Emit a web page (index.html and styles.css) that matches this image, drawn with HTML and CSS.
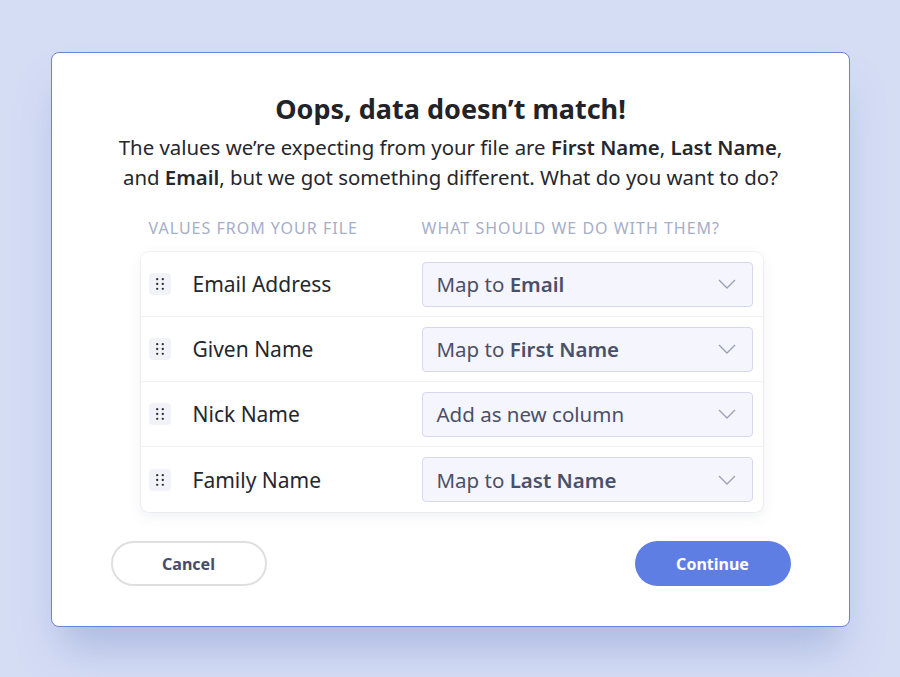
FILE: index.html
```html
<!DOCTYPE html>
<html lang="en">
<head>
<meta charset="utf-8">
<title>Data mismatch</title>
<link rel="stylesheet" href="styles.css">
</head>
<body>
<div class="modal">
  <h1 class="title">Oops, data doesn’t match!</h1>
  <p class="lead">The values we’re expecting from your file are <b>First Name</b>, <b>Last Name</b>, and <b>Email</b>, but we got something different. What do you want to do?</p>
  <div class="mapper">
    <div class="heads">
      <span class="head">Values from your file</span>
      <span class="head">What should we do with them?</span>
    </div>
    <div class="table">
      <div class="row">
        <span class="grip"><svg width="8" height="12" viewBox="0 0 8 12"><circle cx="1.2" cy="1.2" r="1.15"/><circle cx="6.8" cy="1.2" r="1.15"/><circle cx="1.2" cy="6" r="1.15"/><circle cx="6.8" cy="6" r="1.15"/><circle cx="1.2" cy="10.8" r="1.15"/><circle cx="6.8" cy="10.8" r="1.15"/></svg></span>
        <span class="label">Email Address</span>
        <div class="select"><span>Map to <b>Email</b></span><svg class="chev" width="18" height="10" viewBox="0 0 18 10"><path d="M1 1l8 8 8-8"/></svg></div>
      </div>
      <div class="row">
        <span class="grip"><svg width="8" height="12" viewBox="0 0 8 12"><circle cx="1.2" cy="1.2" r="1.15"/><circle cx="6.8" cy="1.2" r="1.15"/><circle cx="1.2" cy="6" r="1.15"/><circle cx="6.8" cy="6" r="1.15"/><circle cx="1.2" cy="10.8" r="1.15"/><circle cx="6.8" cy="10.8" r="1.15"/></svg></span>
        <span class="label">Given Name</span>
        <div class="select"><span>Map to <b>First Name</b></span><svg class="chev" width="18" height="10" viewBox="0 0 18 10"><path d="M1 1l8 8 8-8"/></svg></div>
      </div>
      <div class="row">
        <span class="grip"><svg width="8" height="12" viewBox="0 0 8 12"><circle cx="1.2" cy="1.2" r="1.15"/><circle cx="6.8" cy="1.2" r="1.15"/><circle cx="1.2" cy="6" r="1.15"/><circle cx="6.8" cy="6" r="1.15"/><circle cx="1.2" cy="10.8" r="1.15"/><circle cx="6.8" cy="10.8" r="1.15"/></svg></span>
        <span class="label">Nick Name</span>
        <div class="select"><span>Add as new column</span><svg class="chev" width="18" height="10" viewBox="0 0 18 10"><path d="M1 1l8 8 8-8"/></svg></div>
      </div>
      <div class="row">
        <span class="grip"><svg width="8" height="12" viewBox="0 0 8 12"><circle cx="1.2" cy="1.2" r="1.15"/><circle cx="6.8" cy="1.2" r="1.15"/><circle cx="1.2" cy="6" r="1.15"/><circle cx="6.8" cy="6" r="1.15"/><circle cx="1.2" cy="10.8" r="1.15"/><circle cx="6.8" cy="10.8" r="1.15"/></svg></span>
        <span class="label">Family Name</span>
        <div class="select"><span>Map to <b>Last Name</b></span><svg class="chev" width="18" height="10" viewBox="0 0 18 10"><path d="M1 1l8 8 8-8"/></svg></div>
      </div>
    </div>
  </div>
  <div class="actions">
    <button class="btn cancel">Cancel</button>
    <button class="btn primary">Continue</button>
  </div>
</div>
</body>
</html>
```
FILE: styles.css
```css
* { box-sizing: border-box; }
html, body { margin: 0; height: 100%; }
body {
  background: #d5ddf5;
  font-family: "Noto Sans", "Lato", sans-serif;
  color: #23242a;
  padding: 52px 50px 0 51px;
}
.modal {
  width: 799px;
  height: 575px;
  background: #fff;
  border: 1px solid #6b83d6;
  border-radius: 8px;
  box-shadow: 0 30px 40px -10px rgba(120, 140, 200, 0.45);
  padding: 37px 0 0;
  display: flex;
  flex-direction: column;
  align-items: center;
}
.title {
  margin: 0;
  font-size: 27px;
  font-weight: 700;
  line-height: 38px;
  color: #222328;
}
.lead {
  margin: 4px 0 0;
  width: 672px;
  text-align: center;
  font-size: 20.4px;
  line-height: 30px;
  color: #26272d;
}
.lead b { font-weight: 600; }
.mapper {
  margin-top: 26px;
  width: 622px;
  margin-left: 2px;
}
.heads {
  display: grid;
  grid-template-columns: 273px 1fr;
  padding-left: 8px;
  height: 29px;
}
.head {
  text-transform: uppercase;
  font-size: 16px;
  letter-spacing: 1px;
  color: #a6aec6;
  line-height: 20px;
}
.table {
  margin-top: 5px;
  background: #fff;
  border-radius: 8px;
  box-shadow: 0 4px 14px rgba(90, 100, 140, 0.09), 0 0 0 1px rgba(230, 232, 240, 0.45);
}
.row {
  height: 65px;
  display: flex;
  align-items: center;
  padding-left: 8px;
  border-bottom: 1px solid #f0f1f5;
}
.row:last-child { border-bottom: none; }
.grip {
  width: 22px;
  height: 22px;
  border-radius: 4px;
  background: #f2f3f9;
  display: flex;
  align-items: center;
  justify-content: center;
}
.grip svg { fill: #2e313c; }
.label {
  margin-left: 22px;
  width: 229px;
  font-size: 21px;
  color: #26272d;
}
.select {
  width: 331px;
  height: 45px;
  border: 1px solid #d5d8ee;
  border-radius: 4px;
  background: #f4f5fd;
  display: flex;
  align-items: center;
  justify-content: space-between;
  padding: 0 16px 0 14px;
  font-size: 20.5px;
  color: #4b5069;
}
.select b { font-weight: 600; }
.chev { fill: none; stroke: #9ba0b6; stroke-width: 1.3; }
.actions {
  margin-top: 29px;
  width: 680px;
  display: flex;
  justify-content: space-between;
}
.btn {
  width: 156px;
  height: 45px;
  border-radius: 23px;
  font-family: inherit;
  font-size: 16px;
  font-weight: 700;
  cursor: pointer;
}
.cancel {
  background: #fff;
  border: 2px solid #dfdfe2;
  color: #474c68;
}
.primary {
  background: #5f7ee3;
  border: none;
  color: #fff;
}
```
